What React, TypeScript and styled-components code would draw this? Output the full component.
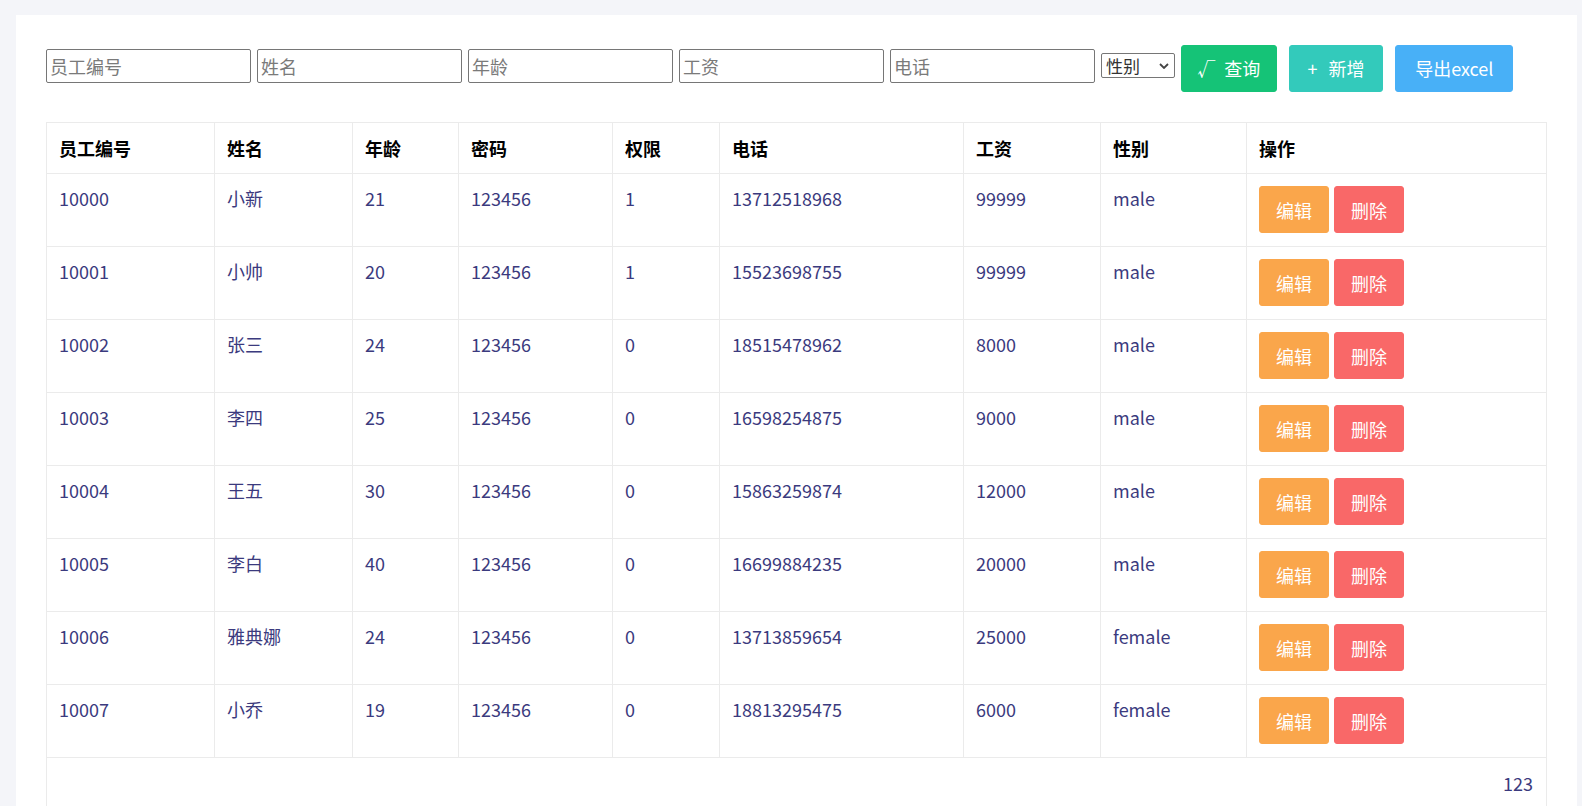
import styled, { createGlobalStyle } from "styled-components"

type Employee = {
	id: string
	name: string
	age: number
	password: string
	role: number
	phone: string
	salary: number
	gender: string
}

const employees: Employee[] = [
	{ id: "10000", name: "小新", age: 21, password: "123456", role: 1, phone: "13712518968", salary: 99999, gender: "male" },
	{ id: "10001", name: "小帅", age: 20, password: "123456", role: 1, phone: "15523698755", salary: 99999, gender: "male" },
	{ id: "10002", name: "张三", age: 24, password: "123456", role: 0, phone: "18515478962", salary: 8000, gender: "male" },
	{ id: "10003", name: "李四", age: 25, password: "123456", role: 0, phone: "16598254875", salary: 9000, gender: "male" },
	{ id: "10004", name: "王五", age: 30, password: "123456", role: 0, phone: "15863259874", salary: 12000, gender: "male" },
	{ id: "10005", name: "李白", age: 40, password: "123456", role: 0, phone: "16699884235", salary: 20000, gender: "male" },
	{ id: "10006", name: "雅典娜", age: 24, password: "123456", role: 0, phone: "13713859654", salary: 25000, gender: "female" },
	{ id: "10007", name: "小乔", age: 19, password: "123456", role: 0, phone: "18813295475", salary: 6000, gender: "female" },
]

const columns = [
	{ title: "员工编号", width: 168 },
	{ title: "姓名", width: 138 },
	{ title: "年龄", width: 106 },
	{ title: "密码", width: 154 },
	{ title: "权限", width: 107 },
	{ title: "电话", width: 244 },
	{ title: "工资", width: 137 },
	{ title: "性别", width: 146 },
	{ title: "操作", width: 300 },
]

const searchFields = ["员工编号", "姓名", "年龄", "工资", "电话"]

const colors = {
	success: "#15c377",
	primary: "#33cabb",
	info: "#48b0f7",
	warning: "#faa64b",
	danger: "#f96868",
}

const GlobalStyle = createGlobalStyle`
	html, body {
		margin: 0;
		padding: 0;
		overflow: hidden;
		background: #f4f5f9;
		font-family: "Noto Sans CJK SC", "Noto Sans", sans-serif;
	}
`

const App = () => {
	return (
		<>
			<GlobalStyle />
			<Page>
				<Card>
					<Toolbar>
						{searchFields.map((field) => (
							<SearchInput key={field} placeholder={field} />
						))}
						<SelectWrap>
							<GenderSelect defaultValue="">
								<option value="">性别</option>
								<option value="male">male</option>
								<option value="female">female</option>
							</GenderSelect>
							<Chevron viewBox="0 0 10 6" aria-hidden>
								<path d="M1 1 L5 5 L9 1" fill="none" stroke="#444" strokeWidth="1.8" />
							</Chevron>
						</SelectWrap>
						<ToolButton $color={colors.success} $width={96} $gap={9}>
							<span>√</span>
							<span>查询</span>
						</ToolButton>
						<ToolButton $color={colors.primary} $width={94} $gap={11}>
							<span>+</span>
							<span>新增</span>
						</ToolButton>
						<ToolButton $color={colors.info} $width={118} $gap={0}>
							导出excel
						</ToolButton>
					</Toolbar>

					<Table>
						<colgroup>
							{columns.map((c) => (
								<col key={c.title} style={{ width: c.width }} />
							))}
						</colgroup>
						<thead>
							<tr>
								{columns.map((c) => (
									<Th key={c.title}>{c.title}</Th>
								))}
							</tr>
						</thead>
						<tbody>
							{employees.map((e) => (
								<tr key={e.id}>
									<Td>{e.id}</Td>
									<Td>{e.name}</Td>
									<Td>{e.age}</Td>
									<Td>{e.password}</Td>
									<Td>{e.role}</Td>
									<Td>{e.phone}</Td>
									<Td>{e.salary}</Td>
									<Td>{e.gender}</Td>
									<Td>
										<ActionButton $color={colors.warning}>编辑</ActionButton>
										<ActionButton $color={colors.danger}>删除</ActionButton>
									</Td>
								</tr>
							))}
							<tr>
								<PagerCell colSpan={columns.length}>123</PagerCell>
							</tr>
						</tbody>
					</Table>
				</Card>
			</Page>
		</>
	)
}

export default App

const Page = styled.div`
	padding: 15px 5px 0 16px;
	min-height: 806px;
	box-sizing: border-box;
`

const Card = styled.main`
	background: #fff;
	padding: 30px 31px 40px 30px;
	min-height: 900px;
	box-sizing: border-box;
`

const Toolbar = styled.div`
	display: flex;
	align-items: flex-start;
	gap: 5.8px;
	margin-bottom: 30px;
`

const SearchInput = styled.input`
	width: 205.2px;
	height: 34px;
	box-sizing: border-box;
	border: 1px solid #767676;
	border-radius: 2px;
	padding: 1px 3px;
	font-family: "Noto Sans CJK SC", sans-serif;
	font-size: 18px;
	color: #333;
	margin-top: 4px;

	&::placeholder {
		color: #7a7a7a;
	}
`

const SelectWrap = styled.span`
	position: relative;
	display: inline-block;
	margin-top: 8px;
`

const GenderSelect = styled.select`
	appearance: none;
	width: 74px;
	height: 25px;
	box-sizing: border-box;
	border: 1px solid #767676;
	border-radius: 2px;
	font-family: "Noto Sans CJK SC", sans-serif;
	font-size: 17px;
	line-height: 21px;
	color: #333;
	background: #fff;
	padding: 0 20px 0 4px;
	display: block;
`

const Chevron = styled.svg`
	position: absolute;
	right: 6px;
	top: 10px;
	width: 10px;
	height: 6px;
	pointer-events: none;
`

const ToolButton = styled.button<{ $color: string; $width: number; $gap: number }>`
	display: inline-flex;
	align-items: center;
	justify-content: center;
	gap: ${({ $gap }) => $gap}px;
	width: ${({ $width }) => $width}px;
	height: 47px;
	padding: 0;
	border: 1px solid ${({ $color }) => $color};
	border-radius: 3px;
	background: ${({ $color }) => $color};
	color: #fff;
	font-family: "Noto Sans CJK SC", sans-serif;
	font-size: 18px;
	line-height: 25px;
	cursor: pointer;

	& + & {
		margin-left: 6.5px;
	}
`

const Table = styled.table`
	width: 1500px;
	table-layout: fixed;
	border-collapse: collapse;
	border: 1px solid #ebebeb;
	font-size: 18px;
	line-height: 26px;
`

const Th = styled.th`
	text-align: left;
	font-weight: 700;
	color: #000;
	padding: 12px;
	border: 1px solid #ebebeb;
`

const Td = styled.td`
	vertical-align: top;
	padding: 11px 12px 12px;
	color: #3b3a7e;
	border: 1px solid #ebebeb;
	height: 49px;
	white-space: nowrap;
`

const PagerCell = styled.td`
	text-align: right;
	padding: 12px 13px 13px;
	color: #3b3a7e;
	border: 1px solid #ebebeb;
`

const ActionButton = styled.button<{ $color: string }>`
	width: 70px;
	height: 47px;
	margin: 1px 5px 0 0;
	padding: 0;
	border: 1px solid ${({ $color }) => $color};
	border-radius: 3px;
	background: ${({ $color }) => $color};
	color: #fff;
	font-family: "Noto Sans CJK SC", sans-serif;
	font-size: 18px;
	cursor: pointer;
	vertical-align: top;
`
